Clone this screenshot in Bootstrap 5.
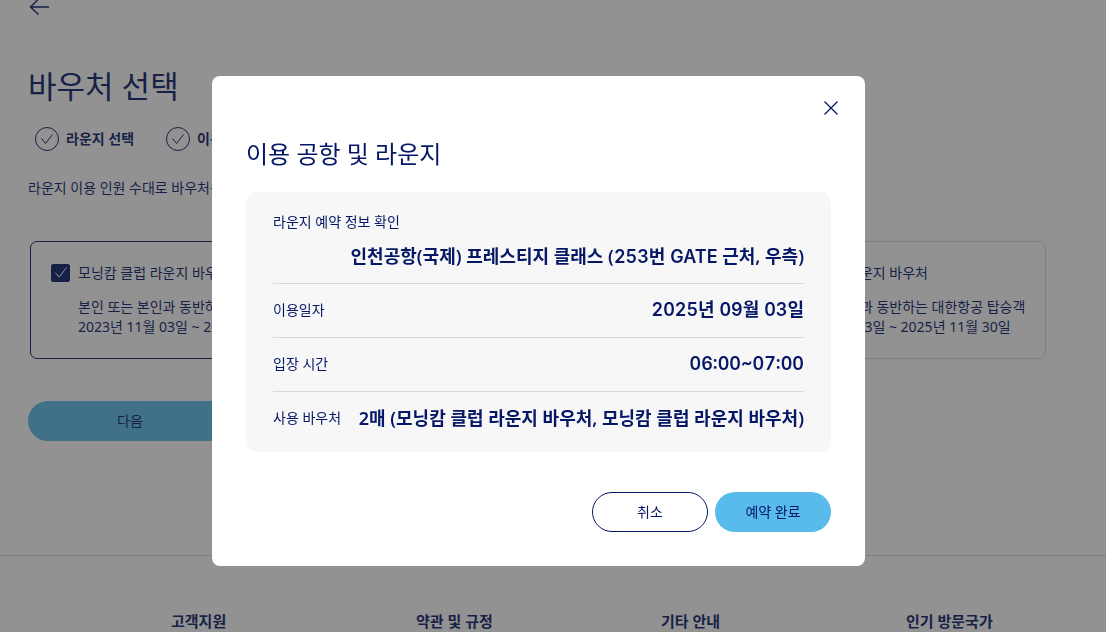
<!DOCTYPE html>
<html lang="ko">
<head>
<meta charset="utf-8">
<meta name="viewport" content="width=device-width, initial-scale=1">
<title>바우처 선택</title>
<link href="https://cdn.jsdelivr.net/npm/bootstrap@5.3.0/dist/css/bootstrap.min.css" rel="stylesheet">
<style>
:root { --navy: #051766; --sky: #58bbec; --line: #d9d9d9; }
body { font-family: "Noto Sans", "Noto Sans CJK KR", sans-serif; font-size: 14px; line-height: 20px; color: var(--navy); }
.numeric { font-family: Inter, "Noto Sans CJK KR", sans-serif; font-variant-numeric: tabular-nums; }
span.numeric { line-height: 20px; }
.page-main { padding: 0 60px 0 28px; }
.back-link { display: block; width: 24px; height: 22px; overflow: hidden; }
.back-link svg, .step-item svg, .btn-x svg { display: block; }
.page-title { font-size: 31px; line-height: 40px; font-weight: 400; margin: 44px 0 20px; }
.step-list { gap: 31px; padding-left: 6px; margin-bottom: 26px; }
.step-item { font-weight: 700; gap: 6px; }
.voucher-grid { display: grid; grid-template-columns: repeat(3, minmax(0, 1fr)); gap: 30px; margin: 43px 0 42px 2px; }
.voucher { border: 1px solid var(--line); border-radius: 7px; padding: 21px 20px; min-height: 118px; white-space: nowrap; }
.voucher.chosen { border-color: var(--navy); }
.voucher .form-check-input { width: 19px; height: 18px; margin: 0; border-radius: 2px; border-color: #8c94b0; background-size: 100%; }
.voucher .form-check-input:checked { background-color: var(--navy); border-color: var(--navy);
  background-image: url("data:image/svg+xml,%3Csvg xmlns='http://www.w3.org/2000/svg' viewBox='0 0 18 18'%3E%3Cpath fill='none' stroke='%23fff' d='M3.500 8.500l4 4.500 8-10'/%3E%3C/svg%3E"); }
.voucher p { margin: 14px 0 0 27px; }
.pill { height: 40px; border-radius: 20px; font-size: 14px; line-height: 20px; padding: 0; color: var(--navy);
  --bs-btn-hover-color: var(--navy); --bs-btn-hover-bg: #45aee2; }
.pill-sky { background: var(--sky); }
.pill-line { border: 1px solid var(--navy); background: #fff; }
.pill-next { width: 204px; }
.pill-small { width: 116px; }
.site-footer { border-top: 1px solid var(--line); margin-top: 114px; padding: 55px 0 0 171px; display: grid; grid-template-columns: 1fr 1fr 1fr 200px; }
.site-footer h2 { font-size: 15px; line-height: 20px; font-weight: 600; margin: 0; }
.modal-backdrop { --bs-backdrop-bg: #292929; --bs-backdrop-opacity: .51; }
.confirm-layer { padding-right: 29px; }
.confirm-layer .modal-dialog { max-width: 653px; margin: 76px auto 0; }
.confirm-layer .modal-content { border: 0; border-radius: 8px; color: var(--navy); padding: 20px 34px 34px; }
.btn-x { border: 0; background: none; padding: 0; width: 24px; height: 24px; margin: 0 -12px 0 auto; color: var(--navy); }
.modal-heading { font-size: 24px; line-height: 36px; font-weight: 400; margin: 16px 0 20px; }
.info-box { background: #f7f7f7; border-radius: 10px; padding: 20px 27px 7px; }
.info-row { display: flex; flex-wrap: wrap; align-items: center; justify-content: space-between; row-gap: 10px; margin: 0; padding: 12px 0 13px; border-bottom: 1px solid var(--line); }
.info-row:first-child { padding-top: 0; }
.info-row:last-child { border-bottom: 0; }
.info-row dt { font-weight: 400; }
.info-row dd { margin: 0; font-size: 18px; line-height: 28px; font-weight: 600; }
.info-row .wide { flex: 0 0 100%; }
.modal-actions { gap: 7px; margin-top: 40px; }
</style>
</head>
<body class="modal-open overflow-hidden">
<main class="page-main">
  <a class="back-link" href="#" aria-label="뒤로">
    <svg width="24" height="20" viewBox="0 0 24 20" fill="none" stroke="#051766" stroke-width="1.4"><path d="M2.500 7H21M10.500-1L2.500 7l8 7.500"/></svg>
  </a>
  <h1 class="page-title">바우처 선택</h1>
  <ol class="step-list list-unstyled d-flex">
    <li class="step-item d-flex align-items-center"><svg width="26" height="26" viewBox="0 0 26 26" fill="none" stroke="#051766"><circle cx="13" cy="13" r="11.500"/><path d="M7.500 12.500l4 5 7-9"/></svg>라운지 선택</li>
    <li class="step-item d-flex align-items-center"><svg width="26" height="26" viewBox="0 0 26 26" fill="none" stroke="#051766"><circle cx="13" cy="13" r="11.500"/><path d="M7.500 12.500l4 5 7-9"/></svg>이용 정보 입력</li>
    <li class="step-item d-flex align-items-center"><svg width="26" height="26" viewBox="0 0 26 26" fill="none" stroke="#051766"><circle cx="13" cy="13" r="11.500"/></svg>바우처 선택</li>
  </ol>
  <p class="mb-0">라운지 이용 인원 수대로 바우처를 선택해 주세요.</p>
  <div class="voucher-grid">
    <div class="voucher chosen">
      <div class="d-flex align-items-center gap-2"><input class="form-check-input" type="checkbox" id="v1" checked><label for="v1">모닝캄 클럽 라운지 바우처</label></div>
      <p>본인 또는 본인과 동반하는 대한항공 탑승객<br>2023년 11월 03일 ~ 2025년 11월 30일</p>
    </div>
    <div class="voucher chosen">
      <div class="d-flex align-items-center gap-2"><input class="form-check-input" type="checkbox" id="v2" checked><label for="v2">모닝캄 클럽 라운지 바우처</label></div>
      <p>본인 또는 본인과 동반하는 대한항공 탑승객<br>2023년 11월 03일 ~ 2025년 11월 30일</p>
    </div>
    <div class="voucher">
      <div class="d-flex align-items-center gap-2"><input class="form-check-input" type="checkbox" id="v3"><label for="v3">모닝캄 클럽 라운지 바우처</label></div>
      <p>본인 또는 본인과 동반하는 대한항공 탑승객<br>2023년 11월 03일 ~ 2025년 11월 30일</p>
    </div>
  </div>
  <button type="button" class="btn pill pill-sky pill-next">다음</button>
</main>
<footer class="site-footer">
  <h2>고객지원</h2><h2>약관 및 규정</h2><h2>기타 안내</h2><h2>인기 방문국가</h2>
</footer>

<div class="modal-backdrop show"></div>
<div class="modal confirm-layer show d-block" tabindex="-1" role="dialog" aria-modal="true" aria-labelledby="confirmTitle">
  <div class="modal-dialog">
    <div class="modal-content">
      <button type="button" class="btn-x" aria-label="닫기"><svg width="24" height="24" viewBox="0 0 24 24" fill="none" stroke="currentColor" stroke-width="1.3"><path d="M5.500 5.500l13 13M18.500 5.500l-13 13"/></svg></button>
      <h2 class="modal-heading" id="confirmTitle">이용 공항 및 라운지</h2>
      <dl class="info-box mb-0">
        <div class="info-row"><dt class="wide">라운지 예약 정보 확인</dt><dd class="wide text-end">인천공항(국제) 프레스티지 클래스 (<span class="numeric">253번 GATE</span> 근처, 우측)</dd></div>
        <div class="info-row"><dt>이용일자</dt><dd class="numeric">2025년 09월 03일</dd></div>
        <div class="info-row"><dt>입장 시간</dt><dd class="numeric">06:00~07:00</dd></div>
        <div class="info-row"><dt>사용 바우처</dt><dd>2매 (모닝캄 클럽 라운지 바우처, 모닝캄 클럽 라운지 바우처)</dd></div>
      </dl>
      <div class="modal-actions d-flex justify-content-end">
        <button type="button" class="btn pill pill-line pill-small">취소</button>
        <button type="button" class="btn pill pill-sky pill-small">예약 완료</button>
      </div>
    </div>
  </div>
</div>
<script src="https://cdn.jsdelivr.net/npm/bootstrap@5.3.0/dist/js/bootstrap.bundle.min.js"></script>
</body>
</html>
